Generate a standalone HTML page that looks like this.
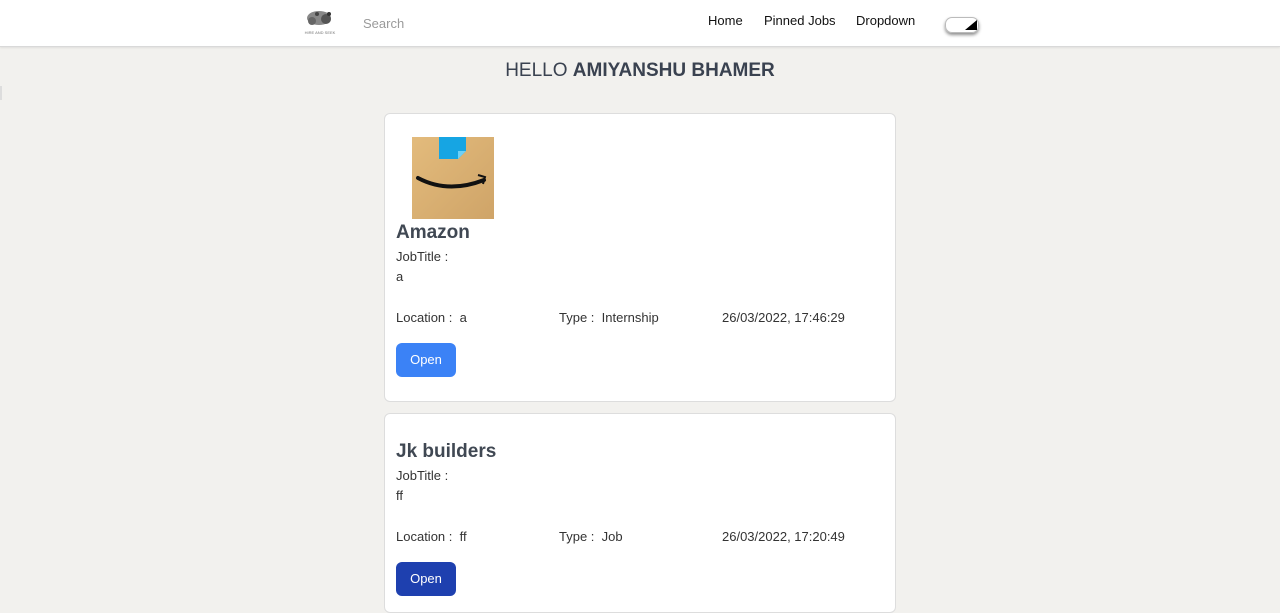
<!DOCTYPE html>
<html><head><meta charset="utf-8"><style>
*{box-sizing:border-box;margin:0;padding:0}
body{width:1280px;height:598px;overflow:hidden;background:#f2f1ee;font-family:"Liberation Sans",sans-serif;color:#374151;position:relative}
.nav{position:absolute;left:0;top:0;width:1280px;height:47px;background:#fff;border-bottom:1px solid #d9d9d9;box-shadow:0 1px 2px rgba(0,0,0,.08)}
.search{position:absolute;left:363px;top:16px;font-size:13px;color:#9a9a9a}
.links{position:absolute;top:13px;font-size:13px;color:#111}
.tog{position:absolute;left:945px;top:17px;width:34px;height:16px;border-radius:7px;background:#fff;box-shadow:0 2px 3px rgba(0,0,0,.45),inset 0 0 0 1px #bbb;overflow:hidden}
.tog:after{content:"";position:absolute;right:2px;top:3px;width:0;height:0;border-left:12px solid transparent;border-bottom:10px solid #000}
h1{position:absolute;left:0;width:1280px;top:60px;text-align:center;font-size:19px;font-weight:400;color:#3a4250}
h1 b{font-weight:700}
.card{position:absolute;left:384px;width:512px;background:#fff;border:1px solid #ddd;border-radius:6px}
.name{position:absolute;left:11px;font-size:19px;font-weight:700;color:#404853}
.t{position:absolute;font-size:13px;color:#333}
.btn{position:absolute;left:11px;width:60px;height:34px;border-radius:6px;color:#fff;font-size:13px;text-align:center;line-height:34px}
</style></head><body>
<div class="nav">
<svg style="position:absolute;left:301px;top:8px" width="38" height="28" viewBox="0 0 38 28">
<ellipse cx="18" cy="10" rx="12" ry="7" fill="#888"/><circle cx="11" cy="13" r="4" fill="#666"/><circle cx="25" cy="11" r="5" fill="#555"/><circle cx="28" cy="6" r="2" fill="#333"/><circle cx="16" cy="6" r="2" fill="#444"/>
<text x="19" y="26" font-size="4" text-anchor="middle" fill="#777" font-family="Liberation Sans">HIRE AND SEEK</text></svg>
<div class="search">Search</div>
<div class="links" style="left:708px">Home</div>
<div class="links" style="left:764px">Pinned Jobs</div>
<div class="links" style="left:856px">Dropdown</div>
<div class="tog"></div>
</div>
<div style="position:absolute;left:0;top:86px;width:2px;height:14px;background:#ddd"></div>
<h1>HELLO <b>AMIYANSHU BHAMER</b></h1>
<div class="card" style="top:113px;height:289px">
<svg style="position:absolute;left:27px;top:23px" width="82" height="82" viewBox="0 0 82 82">
<defs><linearGradient id="g" x1="0" y1="0" x2="1" y2="1"><stop offset="0" stop-color="#e3bb7c"/><stop offset="1" stop-color="#cfa468"/></linearGradient></defs>
<rect width="82" height="82" fill="url(#g)"/>
<path d="M27 0h27v14l-8 8H27z" fill="#16a5e3"/><path d="M46 22l8-8h-8z" fill="#6fd0f6"/>
<path d="M6 41q30 16 66 2" stroke="#111" stroke-width="4" fill="none" stroke-linecap="round"/>
<path d="M66 38l7 2-2 7" stroke="#111" stroke-width="2" fill="none"/>
</svg>
<div class="name" style="top:108px">Amazon</div>
<div class="t" style="left:11px;top:135px">JobTitle :</div>
<div class="t" style="left:11px;top:155px">a</div>
<div class="t" style="left:11px;top:196px">Location :&nbsp; a</div>
<div class="t" style="left:174px;top:196px">Type :&nbsp; Internship</div>
<div class="t" style="left:337px;top:196px">26/03/2022, 17:46:29</div>
<div class="btn" style="top:229px;background:#3b82f6">Open</div>
</div>
<div class="card" style="top:413px;height:200px">
<div class="name" style="top:27px">Jk builders</div>
<div class="t" style="left:11px;top:54px">JobTitle :</div>
<div class="t" style="left:11px;top:74px">ff</div>
<div class="t" style="left:11px;top:115px">Location :&nbsp; ff</div>
<div class="t" style="left:174px;top:115px">Type :&nbsp; Job</div>
<div class="t" style="left:337px;top:115px">26/03/2022, 17:20:49</div>
<div class="btn" style="top:148px;background:#1e40af">Open</div>
</div>
</body></html>
